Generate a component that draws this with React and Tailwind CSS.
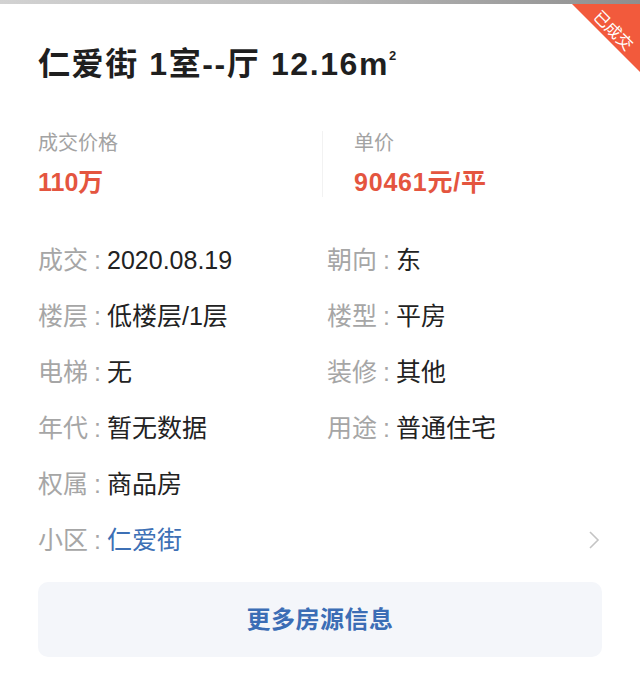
import React from "react";

const font = "font-['Liberation_Sans','Noto_Sans_CJK_SC',sans-serif]";

function Row({ label, value, blue }) {
  return (
    <div className="flex items-center h-[56px] text-[25px] leading-none">
      <span className="text-[#a6a6a6]">{label}</span>
      <span className="text-[#a6a6a6] w-[19px] text-center">:</span>
      <span className={blue ? "text-[#3d70b5]" : "text-[#222222]"}>{value}</span>
    </div>
  );
}

export default function App() {
  return (
    <div className={`${font} relative w-[640px] h-[680px] bg-white overflow-hidden`}>
      <div className="h-[4px] bg-gradient-to-r from-[#d2d2d2] via-[#b9b9b9] to-[#8e8e8e]" />
      {/* ribbon */}
      <div className="absolute top-[4px] right-0 w-[68px] h-[68px] bg-[#f25a3c] [clip-path:polygon(0_0,100%_0,100%_100%)]" />
      <div className="absolute top-[23px] right-[-1px] w-[56px] text-center rotate-45 text-white text-[16px] leading-none">
        已成交
      </div>

      <div className="px-[38px]">
        <h1 className="pt-[42px] text-[32px] leading-[37px] font-semibold text-[#1f1f1f] tracking-[1.6px]">
          仁爱街 1室--厅 12.16m
          <span className="text-[13px] leading-none relative top-[-15px]">2</span>
        </h1>

        <div className="mt-[48px] flex">
          <div className="w-[284px]">
            <div className="text-[20px] leading-[24px] text-[#a3a3a3]">成交价格</div>
            <div className="mt-[12px] text-[25px] leading-[30px] font-bold text-[#e4553f]">110万</div>
          </div>
          <div className="border-l border-[#f2f2f2] pl-[31px]">
            <div className="text-[20px] leading-[24px] text-[#a3a3a3]">单价</div>
            <div className="mt-[12px] text-[25px] leading-[30px] font-bold text-[#e4553f] tracking-[0.8px]">90461元/平</div>
          </div>
        </div>

        <div className="mt-[35px] grid grid-cols-[289px_1fr]">
          <Row label="成交" value="2020.08.19" />
          <Row label="朝向" value="东" />
          <Row label="楼层" value="低楼层/1层" />
          <Row label="楼型" value="平房" />
          <Row label="电梯" value="无" />
          <Row label="装修" value="其他" />
          <Row label="年代" value="暂无数据" />
          <Row label="用途" value="普通住宅" />
          <Row label="权属" value="商品房" />
          <div />
          <div className="col-span-2 flex items-center justify-between">
            <Row label="小区" value="仁爱街" blue />
            <svg width="12" height="20" viewBox="0 0 12 20" className="mr-[2px]">
              <polyline points="2,2 10,10 2,18" fill="none" stroke="#c4c4c4" strokeWidth="1.6" />
            </svg>
          </div>
        </div>

        <div className="mt-[14px] h-[75px] rounded-[10px] bg-[#f4f6fa] flex items-center justify-center text-[24px] font-semibold text-[#3b6db5] tracking-[0.5px]">
          更多房源信息
        </div>
      </div>
    </div>
  );
}
